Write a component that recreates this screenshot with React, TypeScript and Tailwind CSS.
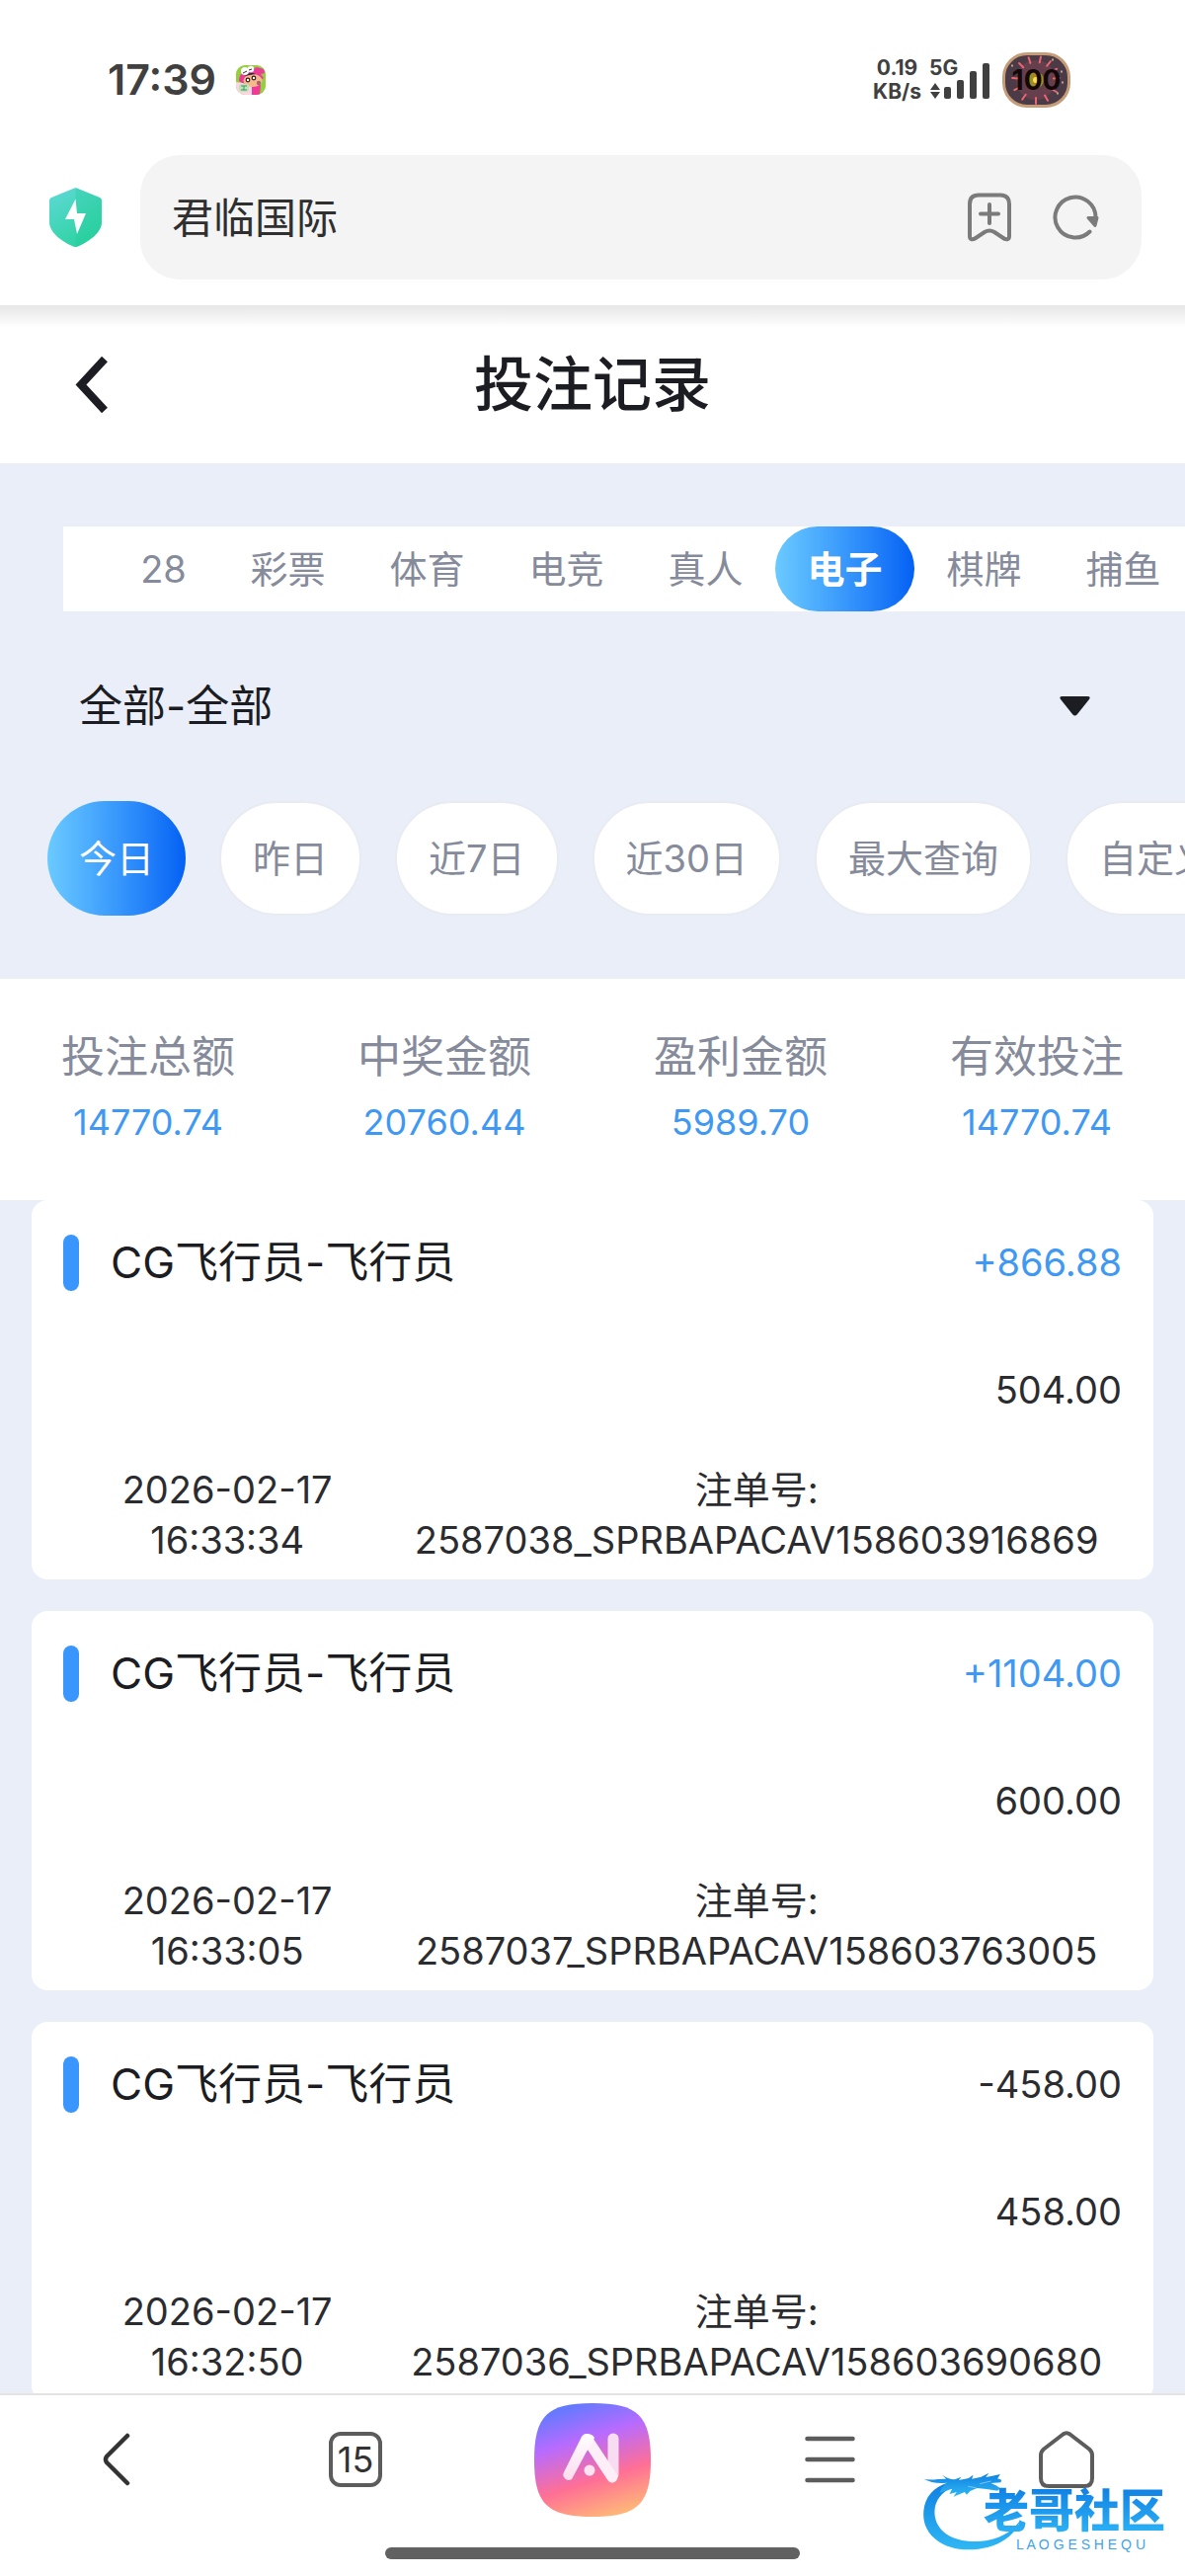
import { useState } from "react";
import type { ReactNode } from "react";

const gameTabs = ["彩票", "体育", "电竞", "真人", "电子", "棋牌", "捕鱼"];
const ranges = ["今日", "昨日", "近7日", "近30日", "最大查询", "自定义"];

const totals = [
  { label: "投注总额", value: "14770.74" },
  { label: "中奖金额", value: "20760.44" },
  { label: "盈利金额", value: "5989.70" },
  { label: "有效投注", value: "14770.74" },
];

type Bet = { game: string; profit: string; stake: string; date: string; time: string; order: string };

const bets: Bet[] = [
  { game: "CG飞行员-飞行员", profit: "+866.88", stake: "504.00", date: "2026-02-17", time: "16:33:34", order: "2587038_SPRBAPACAV158603916869" },
  { game: "CG飞行员-飞行员", profit: "+1104.00", stake: "600.00", date: "2026-02-17", time: "16:33:05", order: "2587037_SPRBAPACAV158603763005" },
  { game: "CG飞行员-飞行员", profit: "-458.00", stake: "458.00", date: "2026-02-17", time: "16:32:50", order: "2587036_SPRBAPACAV158603690680" },
];

function Sticker() {
  return (
    <svg viewBox="0 0 30 30" className="h-[30px] w-[30px]" aria-hidden="true">
      <defs>
        <clipPath id="sticker"><rect width="30" height="30" rx="9" /></clipPath>
      </defs>
      <g clipPath="url(#sticker)">
        <rect width="30" height="30" fill="#93cf3f" />
        <path d="M3 16c0-6 3-9 8-10l10-4 7 2 1 4-4 1 3 4-6 4-14 2z" fill="#ec3b96" />
        <path d="M0 17l12 2 6 3-2 8H0z" fill="#ffd3e4" />
        <path d="M16 20h9l-1 10h-8z" fill="#f03a98" />
        <ellipse cx="17" cy="15.500" rx="9.500" ry="6.500" fill="#f6b98c" />
        <path d="M8 12c3-4 8-5 12-3l-6 1-5 1z" fill="#3a2130" />
        <circle cx="9" cy="6" r="4" fill="#fff" />
        <circle cx="15" cy="4" r="3.200" fill="#fff" />
        <path d="M7 8l4-2M13 5l3-1" stroke="#333" strokeWidth="1" />
        <circle cx="12" cy="15" r="1.800" fill="#fff" stroke="#301c20" strokeWidth="1.200" />
        <circle cx="18" cy="13" r="1.800" fill="#fff" stroke="#301c20" strokeWidth="1.200" />
        <circle cx="23" cy="18" r="2.200" fill="#a8646b" />
        <rect x="3" y="19" width="10" height="8" rx="3" fill="#b8e6b4" />
        <path d="M5 21h6M5 25h6M8 21v4" stroke="#4b8f66" strokeWidth="1" />
      </g>
    </svg>
  );
}

function Battery() {
  const rays = [12, 38, 62, 85, 120, 150, 180, 215, 245, 275, 315, 342];
  return (
    <span className="relative flex h-14 w-[69px] items-center justify-center overflow-hidden rounded-[25px] border-[3px] border-[#c69c78] bg-[#4a3b46]">
      <svg viewBox="0 0 63 50" className="absolute inset-0 h-full w-full" aria-hidden="true">
        <circle cx="31" cy="25" r="20" fill="#7a4252" opacity="0.6" />
        {rays.map((a) => (
          <path key={a} d="M31 7V1" stroke="#ee6471" strokeWidth="2" strokeLinecap="round" transform={`rotate(${a} 31 25)`} />
        ))}
        <circle cx="31" cy="25" r="8" fill="#a08c22" />
        <circle cx="31" cy="25" r="3" fill="#f2e35a" />
        <path d="M57 16v1M58 27v1M53 38v1M7 10v1M48 4v1" stroke="#e8cf9c" strokeWidth="1.400" strokeLinecap="round" />
      </svg>
      <span className="relative text-[28px] leading-none font-bold text-[#12080a]">100</span>
    </span>
  );
}

function StatusBar() {
  return (
    <div className="flex h-[157px] items-center justify-between pt-1 pr-[116px] pl-[109px] text-[#404040]">
      <div className="flex items-center gap-5">
        <span className="text-[43px] font-semibold">17:39</span>
        <Sticker />
      </div>
      <div className="flex items-center">
        <div className="text-center text-[21px] leading-6 font-bold">
          <p>0.19</p>
          <p>KB/s</p>
        </div>
        <div className="relative ml-2 h-12 w-[62px] text-[21px] leading-6 font-bold">
          5G
          <svg viewBox="0 0 62 48" className="absolute inset-0 h-full w-full" fill="currentColor" aria-hidden="true">
            <path d="M6 27l5 7H1zM6 43l5-7H1z" />
            <rect x="15" y="31" width="7" height="12" rx="2" />
            <rect x="28" y="24" width="7" height="19" rx="2" />
            <rect x="41" y="15" width="7" height="28" rx="2" />
            <rect x="54" y="7" width="7" height="36" rx="2" />
          </svg>
        </div>
        <div className="ml-3"><Battery /></div>
      </div>
    </div>
  );
}

function AddressBar() {
  return (
    <div className="flex items-center pr-11 pb-[26px] pl-[50px]">
      <svg viewBox="0 0 53 60" className="mr-[39px] h-[60px] w-[53px] shrink-0" aria-hidden="true">
        <defs>
          <linearGradient id="shield" x1="0" y1="0" x2="0.500" y2="1">
            <stop offset="0" stopColor="#5fd9d6" />
            <stop offset="1" stopColor="#2fd3a4" />
          </linearGradient>
        </defs>
        <path d="M24 1q2.500-1.500 5 0l22 9q2 1 2 3v22c0 10-12 19-23 24q-3.500 2-7 0C12 54 0 45 0 35V13q0-2 2-3z" fill="url(#shield)" />
        <path d="M26.500 0q1.500 0 2.500 1l22 9q2 1 2 3v22c0 10-12 19-23 24q-2 1-3.500 1z" fill="#18c88f" opacity="0.250" />
        <path d="M26.500 11.500L16 32h9l3 15 9-21h-9z" fill="#fff" strokeLinejoin="round" />
      </svg>
      <div className="flex h-[126px] min-w-0 flex-1 items-center rounded-[40px] bg-[#f4f4f4] pr-[43px] pl-8 text-[#7b7b7b]">
        <input aria-label="地址栏" defaultValue="君临国际" className="min-w-0 flex-1 bg-transparent text-[42px] text-[#2f2f2f] outline-none" />
        <button type="button" aria-label="添加书签">
          <svg viewBox="0 0 44 50" className="h-[50px] w-11" fill="none" stroke="currentColor" strokeWidth="4" strokeLinecap="round" strokeLinejoin="round">
            <path d="M11 2.500h22q9 0 9 9V44c0 4-3 4-6 2l-9-6q-5-3-10 0l-9 6c-3 2-6 2-6-2V11.500q0-9 9-9z" />
            <path d="M22 12v19M13 21.500h18" />
          </svg>
        </button>
        <button type="button" aria-label="刷新" className="ml-[42px]">
          <svg viewBox="0 0 47 46" className="h-[46px] w-[47px]" fill="none" stroke="currentColor" strokeWidth="4" strokeLinecap="round">
            <path d="M37.500 37.500A20.500 20.500 0 1 1 43.500 23" />
            <path d="M36 23.500h9l-2 8z" fill="currentColor" strokeWidth="3" strokeLinejoin="round" />
          </svg>
        </button>
      </div>
    </div>
  );
}

function TitleBar() {
  return (
    <header className="grid h-40 grid-cols-[1fr_auto_1fr] items-center bg-linear-to-b from-[#e6e6e6] via-white via-[14%] to-white px-[76px]">
      <button type="button" aria-label="返回" className="justify-self-start">
        <svg viewBox="0 0 33 57" className="h-[57px] w-[33px]" fill="none" stroke="#1c1d22" strokeWidth="8">
          <path d="M30 2.500L6 28.500l24 26" />
        </svg>
      </button>
      <h1 className="text-[60px] leading-none font-medium text-[#1c1d22]">投注记录</h1>
    </header>
  );
}

function Filters() {
  const [tab, setTab] = useState("电子");
  const [range, setRange] = useState("今日");
  return (
    <section className="bg-[#e9eef9] pt-16 pb-16 text-[38px] text-[#868b9b]">
      <div className="ml-16 flex h-[86px] overflow-hidden bg-white pl-[46px]">
        <button type="button" className="w-[111px] shrink-0">28</button>
        {gameTabs.map((t) => (
          <button
            key={t}
            type="button"
            aria-pressed={t === tab}
            onClick={() => setTab(t)}
            className={t === tab
              ? "w-[141px] shrink-0 rounded-full bg-linear-to-r from-[#6bcaff] to-[#0560f4] font-bold text-white"
              : "w-[141px] shrink-0"}
          >
            {t}
          </button>
        ))}
      </div>

      <label className="relative mx-20 flex h-48 items-center">
        <select aria-label="游戏" className="w-full appearance-none bg-transparent text-[44px] text-[#1c1d22] outline-none">
          <option>全部-全部</option>
        </select>
        <svg viewBox="0 0 31 20" className="pointer-events-none absolute right-4 h-5 w-[31px]" fill="#1c1d22" aria-hidden="true">
          <path d="M3 0h25q4 0 2 3L18 18q-2.500 3-5 0L1 3q-2-3 2-3z" />
        </svg>
      </label>

      <div className="flex h-[116px] gap-[34px] overflow-hidden pl-12 whitespace-nowrap">
        {ranges.map((r) => (
          <button
            key={r}
            type="button"
            aria-pressed={r === range}
            onClick={() => setRange(r)}
            className={r === range
              ? "shrink-0 rounded-full bg-linear-to-r from-[#6bcaff] to-[#0560f4] px-8 text-white"
              : "shrink-0 rounded-full border-2 border-[#e8ebf2] bg-white px-8"}
          >
            {r}
          </button>
        ))}
      </div>
    </section>
  );
}

function Totals() {
  return (
    <dl className="grid h-56 grid-cols-4 content-center bg-white text-center">
      {totals.map((t) => (
        <div key={t.label}>
          <dt className="text-[44px] leading-[66px] text-[#868b9b]">{t.label}</dt>
          <dd className="text-[36px] leading-[66px] text-[#3f98f2]">{t.value}</dd>
        </div>
      ))}
    </dl>
  );
}

function BetCard({ bet }: { bet: Bet }) {
  const won = bet.profit.startsWith("+");
  return (
    <li className="rounded-2xl bg-white px-8 pt-8 pb-[14px] text-[38px] text-[#2b2c30]">
      <div className="flex h-[62px] items-center">
        <span className="h-[57px] w-4 rounded-lg bg-[#3a96fc]" />
        <h2 className="ml-8 flex-1 text-[44px] leading-none text-[#1c1d22]">{bet.game}</h2>
        <span className={won ? "text-[#3f98f2]" : ""}>{bet.profit}</span>
      </div>
      <p className="mt-[70px] mb-12 text-right leading-[56px]">{bet.stake}</p>
      <div className="grid grid-cols-[31%_69%] text-center leading-[51px]">
        <time>{bet.date}<br />{bet.time}</time>
        <p>注单号:<br />{bet.order}</p>
      </div>
    </li>
  );
}

function AiLogo() {
  return (
    <svg viewBox="0 0 118 115" className="h-[115px] w-[118px]" aria-hidden="true">
      <defs>
        <linearGradient id="ai" x1="0.300" y1="0" x2="0.620" y2="1">
          <stop offset="0" stopColor="#5c7bff" />
          <stop offset="0.320" stopColor="#b76bff" />
          <stop offset="0.680" stopColor="#ff6f95" />
          <stop offset="1" stopColor="#ffb579" />
        </linearGradient>
        <linearGradient id="limb" x1="0" y1="0" x2="0" y2="1">
          <stop offset="0" stopColor="#fff" />
          <stop offset="1" stopColor="#fbdcee" />
        </linearGradient>
      </defs>
      <path d="M59 0c46 0 59 13 59 57.500S105 115 59 115 0 102 0 57.500 13 0 59 0z" fill="url(#ai)" />
      <path d="M80 36v36" stroke="#f8dcf2" strokeWidth="11" strokeLinecap="round" />
      <path d="M54 37L79 75" stroke="#fdeef8" strokeWidth="11" strokeLinecap="round" />
      <path d="M53 31q6 0 8 4l-4 9-4 5-15 28a5.500 5.500 0 0 1-8-7l17-34q2-5 6-5z" fill="url(#limb)" />
      <circle cx="56" cy="68" r="5.500" fill="#fde3ef" />
    </svg>
  );
}

function NavButton({ label, children }: { label: string; children: ReactNode }) {
  return (
    <button type="button" aria-label={label} className="flex h-full items-center justify-center">
      {children}
    </button>
  );
}

function Watermark() {
  return (
    <div className="pointer-events-none absolute right-5 bottom-6 h-[90px] w-[250px]">
      <svg viewBox="0 0 320 270" className="absolute top-0 left-0 h-[90px] w-[107px]" aria-hidden="true">
        <defs>
          <linearGradient id="dragon" x1="0" y1="0" x2="0" y2="1">
            <stop offset="0" stopColor="#0f7fe2" />
            <stop offset="1" stopColor="#2fb8f4" />
          </linearGradient>
        </defs>
        <g fill="url(#dragon)">
          <path d="M92 58C40 72 15 110 15 155c0 64 60 107 136 107 76 0 140-34 157-88-26 38-72 60-126 63-76 4-130-30-133-84-2-36 18-64 54-80l20-18z" />
          <path d="M10 46q22 6 48 2l26-1-12-12q16 12 38 14l20-8-8 10 30-6 14-10-4 12 28-6 24-12-10 13 20-4 24-5-8 13 12 4-2 8-30 2 18 8 10 8-8 7-34-5-28-3-20 8-12 12-6-8-34 14 10-14-22 6 8-16-38 12 8-16 14-14q-42 4-70-12z" />
        </g>
        <path d="M186 62l34-8M150 70l24 4" stroke="#7cc6fb" strokeWidth="3" fill="none" />
      </svg>
      <span className="absolute right-0 bottom-5 bg-linear-to-b from-[#1180e4] to-[#2cb1f4] bg-clip-text text-[46px] leading-[46px] font-black whitespace-nowrap text-transparent">老哥社区</span>
      <span className="absolute right-5 bottom-0 font-['Liberation_Sans'] text-[14px] leading-4 text-[#3fa3ea]">L A O G E S H E Q U</span>
    </div>
  );
}

function BottomNav() {
  return (
    <nav className="relative h-[185px] shrink-0 border-t-2 border-[#e3e3e3] bg-white text-[#5c5c5c]">
      <div className="grid h-[130px] grid-cols-5">
        <NavButton label="后退">
          <svg viewBox="0 0 28 54" className="mr-1 h-[54px] w-7" fill="none" stroke="#333" strokeWidth="4.500" strokeLinecap="round" strokeLinejoin="round">
            <path d="M25 3L4 24q-2 3 0 6l21 21" />
          </svg>
        </NavButton>
        <NavButton label="标签页">
          <span className="flex h-14 w-[54px] items-center justify-center rounded-xl border-4 border-[#5c5c5c] text-[36px] leading-none text-[#333]">15</span>
        </NavButton>
        <NavButton label="AI 助手"><AiLogo /></NavButton>
        <NavButton label="菜单">
          <svg viewBox="0 0 51 48" className="h-12 w-[51px]" stroke="currentColor" strokeWidth="4.500" strokeLinecap="round">
            <path d="M2.500 3h46M2.500 24h46M2.500 45h46" />
          </svg>
        </NavButton>
        <NavButton label="主页">
          <svg viewBox="0 0 56 58" className="h-[58px] w-14" fill="none" stroke="currentColor" strokeWidth="4" strokeLinejoin="round">
            <path d="M24.500 3.500q3.500-2.500 7 0L51 18.500q3 2.500 3 6V48q0 8-8 8H10q-8 0-8-8V24.500q0-3.500 3-6z" />
          </svg>
        </NavButton>
      </div>
      <div className="mx-auto mt-6 h-3 w-[35%] rounded-full bg-[#616161]" />
      <Watermark />
    </nav>
  );
}

export default function App() {
  return (
    <div className="flex h-screen flex-col overflow-hidden bg-white font-[Inter,'Noto_Sans_CJK_SC',sans-serif]">
      <StatusBar />
      <AddressBar />
      <main className="min-h-0 flex-1 overflow-y-auto bg-[#e9eef9] [scrollbar-width:none]">
        <TitleBar />
        <Filters />
        <Totals />
        <ul className="flex flex-col gap-8 px-8 pb-8">
          {bets.map((b) => <BetCard key={b.order} bet={b} />)}
        </ul>
      </main>
      <BottomNav />
    </div>
  );
}
